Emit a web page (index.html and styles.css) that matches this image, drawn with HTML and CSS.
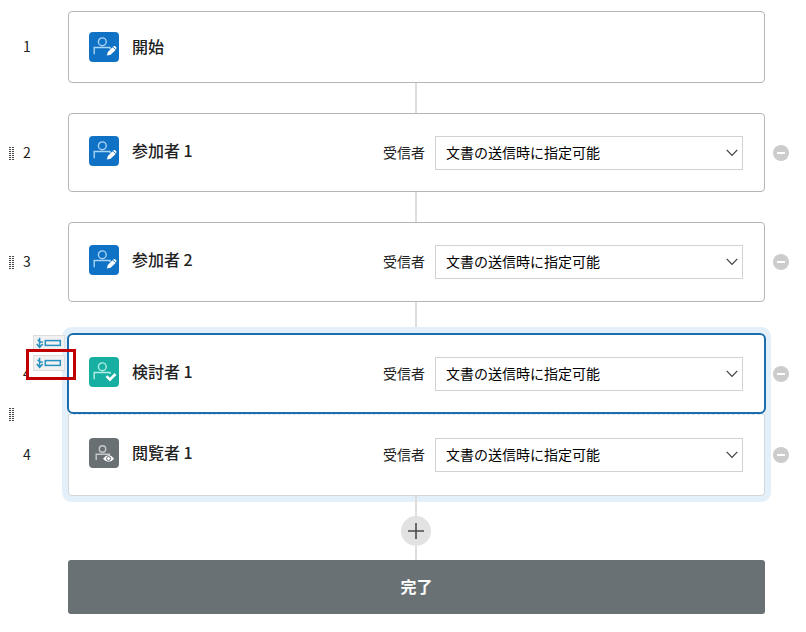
FILE: index.html
```
<!DOCTYPE html>
<html lang="ja">
<head>
<meta charset="utf-8">
<title>ワークフロー</title>
<link rel="stylesheet" href="styles.css">
</head>
<body>
<svg class="defs" width="0" height="0" aria-hidden="true">
  <symbol id="person" viewBox="0 0 30 30">
    <circle cx="13.3" cy="9.8" r="3.9"/>
    <path d="M5.2 22.3V15.5H21V17"/>
  </symbol>
  <symbol id="pencil" viewBox="0 0 30 30">
    <path d="M17.8 23.4L18.8 19.9L23.5 15.2L26.6 18L21.6 22.8Z"/>
    <path d="M24.1 14.8L25 14.1Q26 13.7 27 14.9Q27.8 15.8 27.3 16.6L26.8 17.4Z"/>
  </symbol>
  <symbol id="chevron" viewBox="0 0 12 8"><path d="M.7 .9L6 6.4L11.3 .9"/></symbol>
  <symbol id="insert" viewBox="0 0 26 12">
    <path d="M3.6 .8V10.3M.8 7L3.6 10.3L6.8 7M1.6 2.8L3.8 4.8L6.8 5.2" stroke-width="1.5"/>
    <rect x="9.3" y="3.6" width="15" height="4.8" stroke-width="1.5"/>
  </symbol>
</svg>
<main class="flow">
  <section class="step">
    <div class="gutter"><span class="num">1</span></div>
    <div class="card start">
      <svg class="icon blue" viewBox="0 0 30 30"><use href="#person"/><use class="solid" href="#pencil"/></svg>
      <span class="title">開始</span>
    </div>
  </section>
  <div class="line"></div>
  <section class="step">
    <div class="gutter"><span class="grip"></span><span class="num">2</span></div>
    <div class="card second">
      <svg class="icon blue" viewBox="0 0 30 30"><use href="#person"/><use class="solid" href="#pencil"/></svg>
      <span class="title">参加者 1</span><span class="label">受信者</span>
      <div class="select"><span>文書の送信時に指定可能</span><svg class="chev"><use href="#chevron"/></svg></div>
    </div>
    <span class="remove"></span>
  </section>
  <div class="line"></div>
  <section class="step">
    <div class="gutter"><span class="grip"></span><span class="num">3</span></div>
    <div class="card">
      <svg class="icon blue" viewBox="0 0 30 30"><use href="#person"/><use class="solid" href="#pencil"/></svg>
      <span class="title">参加者 2</span><span class="label">受信者</span>
      <div class="select"><span>文書の送信時に指定可能</span><svg class="chev"><use href="#chevron"/></svg></div>
    </div>
    <span class="remove"></span>
  </section>
  <div class="line long"></div>
  <section class="step group">
    <div class="gutter stacked">
      <span class="num covered">4</span><span class="grip"></span><span class="num">4</span>
      <div class="inserts">
        <span class="insert"><svg><use href="#insert"/></svg></span>
        <span class="insert"><svg><use href="#insert"/></svg></span>
      </div>
      <div class="marker"></div>
    </div>
    <div class="cards">
      <div class="card selected">
        <svg class="icon teal" viewBox="0 0 30 30"><use href="#person"/><path class="check" d="M17.5 19.2L20.9 22.6L26.5 17"/></svg>
        <span class="title">検討者 1</span><span class="label">受信者</span>
        <div class="select"><span>文書の送信時に指定可能</span><svg class="chev"><use href="#chevron"/></svg></div>
      </div>
      <div class="card viewer">
        <svg class="icon gray" viewBox="0 0 30 30"><circle cx="13.5" cy="11" r="3.2"/><path d="M7.2 22V16.3H20.5V17.5"/><path class="eye" d="M14 20.7Q19.5 13.8 25.2 20.7Q19.5 27 14 20.7Z"/><circle class="pupil" cx="19.6" cy="20.5" r="2"/></svg>
        <span class="title">閲覧者 1</span><span class="label">受信者</span>
        <div class="select"><span>文書の送信時に指定可能</span><svg class="chev"><use href="#chevron"/></svg></div>
      </div>
    </div>
    <div class="removes"><span class="remove"></span><span class="remove"></span></div>
  </section>
  <div class="add-area"><div class="line top"></div><svg class="add" viewBox="0 0 30 30"><path d="M15 7V23M7 15H23"/></svg><div class="line end"></div></div>
  <div class="done">完了</div>
</main>
</body>
</html>
```
FILE: styles.css
```
* { box-sizing: border-box; }
body {
  margin: 0;
  background: #fff;
  color: #222;
  font: 14px/20px "Noto Sans CJK JP", sans-serif;
}
.defs { position: absolute; }
.flow { padding-top: 11px; }
.step { display: grid; grid-template-columns: 68px 697px 41px; align-items: center; }
.gutter { display: flex; align-items: center; height: 20px; padding-left: 9px; }
.num { width: 8px; margin-left: auto; margin-right: 37px; line-height: 18px; padding-bottom: 2px; text-align: center; }
.grip {
  width: 5px;
  height: 14px;
  background:
    repeating-linear-gradient(#fff 0 1px, transparent 1px 2px),
    linear-gradient(90deg, #444 0 2px, transparent 2px 3px, #444 3px 5px);
}
.card {
  display: flex;
  align-items: flex-start;
  height: 80px;
  padding: 22px 21px 0 20px;
  border: 1px solid #b5b5b5;
  border-radius: 4px;
  background: #fff;
}
.card.start { height: 72px; padding-top: 20px; }
.card.second { height: 79px; }
.icon { flex: none; width: 30px; height: 30px; border-radius: 4px; fill: none; stroke: #a9d4f4; stroke-width: 1.4; }
.blue { background: #1072c4; }
.teal { background: #16afa1; stroke: #b2eee3; }
.gray { background: #687073; stroke: #c4cacc; }
.solid { fill: #fff; stroke: none; }
.check { stroke: #fff; stroke-width: 2.6; }
.eye { fill: #fff; stroke: none; }
.pupil { stroke: #687073; stroke-width: 1; }
.title { margin-left: 13px; font-size: 16px; font-weight: 500; line-height: 28px; white-space: nowrap; }
.label { margin-left: auto; margin-right: 10px; line-height: 32px; }
.select {
  display: flex;
  align-items: center;
  justify-content: space-between;
  width: 308px;
  height: 34px;
  padding: 0 4px 0 10px;
  border: 1px solid #d2d2d2;
  color: #000;
}
.select span { padding-bottom: 2px; }
.chev { width: 12px; height: 8px; fill: none; stroke: #444; stroke-width: 1.3; }
.remove {
  display: grid;
  place-items: center;
  width: 16px;
  height: 16px;
  margin-left: 8px;
  border-radius: 50%;
  background: #ccc;
}
.remove::before { content: ""; width: 8px; height: 2px; background: #fff; }
.line { width: 2px; height: 30px; margin-left: 415px; background: #dedede; }
.line.long { height: 31px; }
.group { align-items: start; }
.stacked { position: relative; display: grid; grid-template-rows: 81px 82px; height: 163px; padding: 0; }
.stacked .num { grid-column: 1; margin: 0 0 0 23px; }
.covered { clip-path: inset(0 5px 0 0); }
.stacked .grip { position: absolute; left: 9px; top: 74px; }
.inserts { position: absolute; z-index: 2; left: 33px; top: 2px; display: grid; gap: 4px; }
.insert { display: grid; place-items: center; width: 32px; height: 16px; border: 1px solid #ddd; background: #f1f1f1; }
.insert svg { width: 26px; height: 12px; fill: none; stroke: #2891c0; }
.marker { position: absolute; z-index: 3; left: 26px; top: 16px; width: 50px; height: 31px; border: 3px solid #c00000; }
.cards {
  height: 163px;
  border-radius: 4px;
  background: #fff;
  box-shadow: 0 0 0 6px #e4f0f9;
}
.selected {
  position: relative;
  height: 81px;
  margin: 0 -1px;
  padding: 22px 21px 0 20px;
  border: 2px solid #1b6eae;
  border-radius: 6px;
}
.viewer { height: 82px; border-color: #d2d7db; border-top: 1px dashed #d5e3f0; border-radius: 0 0 4px 4px; padding-top: 23px; }
.removes { display: grid; gap: 65px; padding-top: 33px; }
.add-area { display: flex; flex-direction: column; height: 64px; }
.line.top { position: relative; height: 20px; }
.add { width: 30px; height: 30px; margin-left: 401px; border-radius: 50%; background: #e2e2e2; fill: none; stroke: #4b4b4b; stroke-width: 1.6; }
.line.end { height: 14px; }
.done {
  width: 697px;
  height: 54px;
  margin-left: 68px;
  border-radius: 3px;
  background: #697174;
  color: #fff;
  font-size: 16px;
  font-weight: 700;
  line-height: 52px;
  text-align: center;
}
```
